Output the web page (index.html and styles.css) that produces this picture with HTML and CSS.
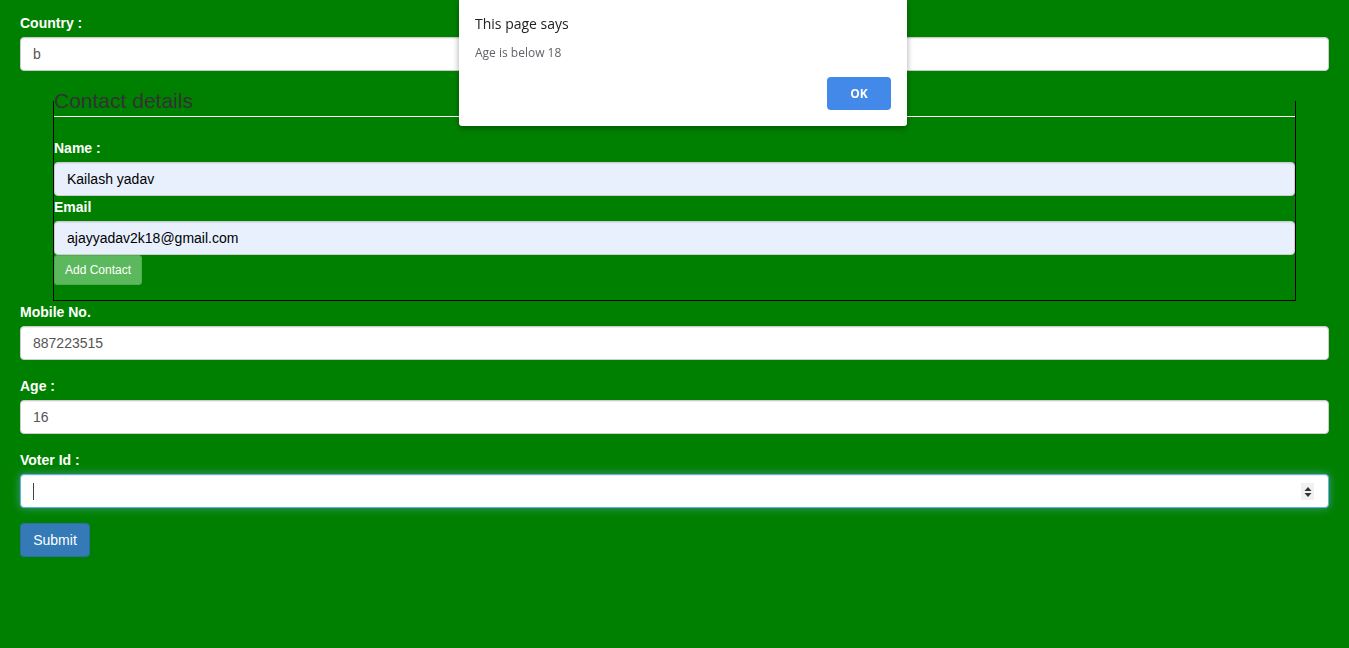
FILE: index.html
```html
<!DOCTYPE html>
<html>
<head>
<meta charset="utf-8">
<link rel="stylesheet" href="styles.css">
</head>
<body>
<form class="page">
  <div class="form-group">
    <label class="lbl">Country :</label>
    <div class="input">b</div>
  </div>
  <fieldset class="contact">
    <legend class="legend">Contact details</legend>
    <label class="lbl">Name :</label>
    <div class="input autofill">Kailash yadav</div>
    <label class="lbl">Email</label>
    <div class="input autofill">ajayyadav2k18@gmail.com</div>
    <button type="button" class="btn btn-sm btn-success">Add Contact</button>
  </fieldset>
  <div class="form-group">
    <label class="lbl">Mobile No.</label>
    <div class="input">887223515</div>
  </div>
  <div class="form-group">
    <label class="lbl">Age :</label>
    <div class="input">16</div>
  </div>
  <div class="form-group">
    <label class="lbl">Voter Id :</label>
    <div class="input focus">
      <span class="caret"></span>
      <span class="spin">
        <svg width="10" height="14" viewBox="0 0 10 14"><path d="M5 2 L8.5 6 L1.5 6 Z M5 12 L8.5 8 L1.5 8 Z" fill="#333"/></svg>
      </span>
    </div>
  </div>
  <button type="button" class="btn btn-primary">Submit</button>
</form>
<div class="dialog">
  <div class="dlg-title">This page says</div>
  <div class="dlg-msg">Age is below 18</div>
  <div class="dlg-actions"><button type="button" class="dlg-ok">OK</button></div>
</div>
</body>
</html>
```
FILE: styles.css
```css
* { box-sizing: border-box; }
html, body { margin: 0; padding: 0; }
body {
  background: #008000;
  font-family: "Liberation Sans", Arial, Helvetica, sans-serif;
  font-size: 14px;
  line-height: 1.42857;
  color: #333;
  height: 648px;
  overflow: hidden;
}
.page {
  padding: 12px 20px 0 20px;
  margin: 0;
}
.form-group { margin-bottom: 15px; }
.lbl {
  display: block;
  font-weight: bold;
  color: #fff;
  margin-bottom: 5px;
  height: 20px;
  padding-top: 1px;
  line-height: 20px;
  overflow: visible;
}
.input {
  position: relative;
  height: 34px;
  padding: 6px 12px;
  background: #fff;
  border: 1px solid #ccc;
  border-radius: 4px;
  color: #555;
  font-size: 14px;
  line-height: 20px;
  box-shadow: inset 0 1px 1px rgba(0,0,0,.075);
}
.input.autofill {
  background: #e8f0fe;
  color: #000;
}
.input.focus {
  border-color: #66afe9;
  box-shadow: inset 0 1px 1px rgba(0,0,0,.075), 0 0 8px rgba(102,175,233,.6);
}
.caret {
  position: absolute;
  left: 12px;
  top: 8px;
  width: 1px;
  height: 17px;
  background: #444;
}
.spin {
  position: absolute;
  right: 14px;
  top: 8px;
  width: 13px;
  height: 17px;
  background: #f1f1f1;
  display: flex;
  align-items: center;
  justify-content: center;
}
.contact {
  margin: 0 33px 0 33px;
  padding: 0 0 15px 0;
  border: 1px solid #000;
  min-width: 0;
}
.legend {
  display: block;
  width: 100%;
  padding: 0;
  margin: 0 0 20px 0;
  font-size: 21px;
  line-height: 30px;
  color: #333;
  border: 0;
  border-bottom: 1px solid #fff;
}
.btn {
  display: inline-block;
  border: 1px solid transparent;
  border-radius: 4px;
  font-family: "Liberation Sans", Arial, sans-serif;
  color: #fff;
  cursor: pointer;
  white-space: nowrap;
}
.btn-sm {
  padding: 5px 10px;
  font-size: 12px;
  line-height: 18px;
  border-radius: 3px;
  height: 30px;
}
.btn-success {
  background: #5cb85c;
  border-color: #4cae4c;
  width: 88px;
  padding: 5px 0;
  text-align: center;
}
.btn-primary {
  background: #337ab7;
  border-color: #2e6da4;
  padding: 6px 0;
  text-align: center;
  font-size: 14px;
  line-height: 20px;
  height: 34px;
  width: 70px;
}
.dialog {
  position: fixed;
  top: 0;
  left: 459px;
  width: 448px;
  height: 126px;
  background: #fff;
  border-radius: 0 0 3px 3px;
  box-shadow: 0 2px 6px rgba(0,0,0,.35);
  padding: 14px 16px 0 16px;
  font-family: "Open Sans", "Noto Sans", sans-serif;
}
.dlg-title {
  font-size: 14px;
  line-height: 20px;
  color: #202124;
}
.dlg-msg {
  margin-top: 11px;
  font-size: 12px;
  line-height: 16px;
  color: #5f6368;
}
.dlg-actions {
  display: flex;
  justify-content: flex-end;
  margin-top: 16px;
}
.dlg-ok {
  width: 64px;
  height: 33px;
  border: 0;
  border-radius: 4px;
  background: #4389ea;
  color: #fff;
  font-family: "Open Sans", "Noto Sans", sans-serif;
  font-weight: bold;
  font-size: 12px;
}
```
